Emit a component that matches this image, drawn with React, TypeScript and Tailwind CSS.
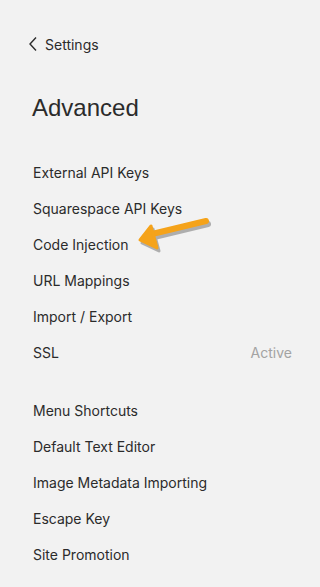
import React from "react";

const group1: { label: string; right?: string }[] = [
  { label: "External API Keys" },
  { label: "Squarespace API Keys" },
  { label: "Code Injection" },
  { label: "URL Mappings" },
  { label: "Import / Export" },
  { label: "SSL", right: "Active" },
];
const group2 = [
  "Menu Shortcuts",
  "Default Text Editor",
  "Image Metadata Importing",
  "Escape Key",
  "Site Promotion",
];

function Row({ label, right }: { label: string; right?: string }) {
  return (
    <div className="flex h-[36px] items-center justify-between pl-[33px] pr-[28px]">
      <span className="text-[14px] text-[#2b2b2b]">{label}</span>
      {right && <span className="text-[14px] text-[#a3a3a3]">{right}</span>}
    </div>
  );
}

export default function App() {
  return (
    <div
      className="relative h-[587px] w-[320px] overflow-hidden bg-[#f2f2f2]"
      style={{ fontFamily: 'Inter, "Liberation Sans", Arial, sans-serif' }}
    >
      <div className="flex items-center pt-[34px] pl-[28px] h-[54px]">
        <svg width="10" height="16" viewBox="0 0 10 16" className="mr-[7px]">
          <path d="M8 1.5 L2 8 L8 14.5" fill="none" stroke="#2b2b2b" strokeWidth="1.4" />
        </svg>
        <span className="text-[14px] text-[#2b2b2b]">Settings</span>
      </div>
      <div className="pl-[32px] pt-[38px] h-[100px]">
        <h1
          className="text-[24px] leading-[32px] text-[#2b2b2b]"
          style={{ fontFamily: '"Liberation Sans", Arial, sans-serif' }}
        >
          Advanced
        </h1>
      </div>
      <div>
        {group1.map((r) => (
          <Row key={r.label} label={r.label} right={r.right} />
        ))}
      </div>
      <div className="pt-[22px]">
        {group2.map((l) => (
          <Row key={l} label={l} />
        ))}
      </div>
      <svg
        className="absolute left-0 top-0"
        width="320"
        height="587"
        viewBox="0 0 320 587"
      >
        <g transform="translate(2,3)" opacity="0.35">
          <path d="M206 221 L152 234" stroke="#333" strokeWidth="6" strokeLinecap="round" fill="none" />
          <path d="M140 240 L151 226 L157 248 Z" fill="#333" stroke="#333" strokeWidth="3" strokeLinejoin="round" />
        </g>
        <path d="M206 221 L152 234" stroke="#f5a31a" strokeWidth="6" strokeLinecap="round" fill="none" />
        <path d="M140 240 L151 226 L157 248 Z" fill="#f5a31a" stroke="#f5a31a" strokeWidth="3" strokeLinejoin="round" />
      </svg>
    </div>
  );
}
